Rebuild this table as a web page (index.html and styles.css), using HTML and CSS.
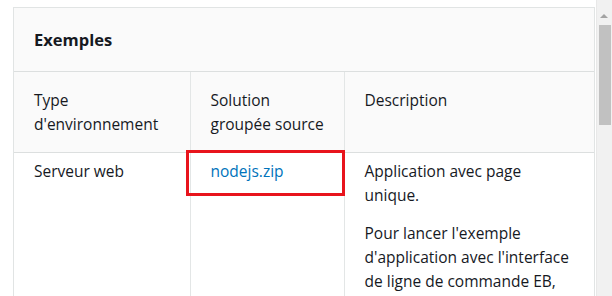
FILE: index.html
```html
<!DOCTYPE html>
<html lang="fr">
<head>
  <meta charset="UTF-8" />
  <meta name="viewport" content="width=device-width, initial-scale=1" />
  <title>Exemples</title>
  <link rel="stylesheet" href="styles.css">
</head>
<body>
  <div class="page">
    <main class="content">
      <section class="card">
        <h2 class="card-title">Exemples</h2>
        <table class="samples">
          <thead>
            <tr>
              <th>Type d'environnement</th>
              <th>Solution<br>groupée source</th>
              <th>Description</th>
            </tr>
          </thead>
          <tbody>
            <tr>
              <td>Serveur web</td>
              <td><a href="#" class="highlight">nodejs.zip</a></td>
              <td>
                <p>Application avec page unique.</p>
                <p>Pour lancer l'exemple d'application avec l'interface de ligne de commande EB,</p>
              </td>
            </tr>
          </tbody>
        </table>
      </section>
    </main>

    <!-- window scrollbar -->
    <div class="scrollbar">
      <span class="scroll-arrow"></span>
      <span class="scroll-thumb"></span>
    </div>
  </div>
</body>
</html>
```

FILE: styles.css
```css
* {
  margin: 0;
  padding: 0;
  box-sizing: border-box;
}

html, body {
  height: 100%;
  overflow: hidden;
}

body {
  font-family: "Open Sans", Arial, sans-serif;
  font-size: 15.5px;
  line-height: 24px;
  color: #16191f;
  background: #fff;
}

.page {
  display: flex;
  height: 296px;
}

.content {
  flex: 1;
  padding: 7px 0 0 13px;
}

.card {
  border: 1px solid #e1e4e4;
  border-bottom: none;
  background: #fafafa;
  height: 100%;
}

.card-title {
  font-size: 16.5px;
  font-weight: 700;
  line-height: 24px;
  padding: 20px 20px 19px;
  border-bottom: 1px solid #dcdfdf;
}

.samples {
  width: 100%;
  border-collapse: collapse;
  table-layout: fixed;
}

.samples th:nth-child(1) { width: 176px; }
.samples th:nth-child(2) { width: 154px; }

.samples th,
.samples td {
  text-align: left;
  vertical-align: top;
  font-weight: 400;
  border-left: 1px solid #e3e6e6;
}

.samples th:first-child,
.samples td:first-child {
  border-left: none;
}

.samples th {
  padding: 16px 6px 16px 20px;
  border-bottom: 1px solid #dcdfdf;
}

.samples td {
  background: #fff;
  padding: 6px 16px 20px 20px;
  height: 200px;
}

.samples p + p {
  margin-top: 14px;
}

.samples a {
  color: #0073bb;
  text-decoration: none;
}

/* red annotation frame around the link cell */
.highlight {
  position: relative;
  display: inline-block;
  vertical-align: top;
}

.highlight::after {
  content: "";
  position: absolute;
  left: -25px;
  top: -9px;
  width: 153px;
  height: 40px;
  border: 3px solid #e8141c;
}

.scrollbar {
  position: relative;
  width: 16px;
  margin-left: 1px;
  background: #f1f1f1;
  border-left: 1px solid #e8e8e8;
}

.scroll-arrow {
  position: absolute;
  top: 14px;
  left: 3px;
  border-left: 4px solid transparent;
  border-right: 4px solid transparent;
  border-bottom: 4px solid #a3a3a3;
}

.scroll-thumb {
  position: absolute;
  top: 25px;
  left: 2px;
  width: 12px;
  height: 100px;
  background: #c1c1c1;
}
```
